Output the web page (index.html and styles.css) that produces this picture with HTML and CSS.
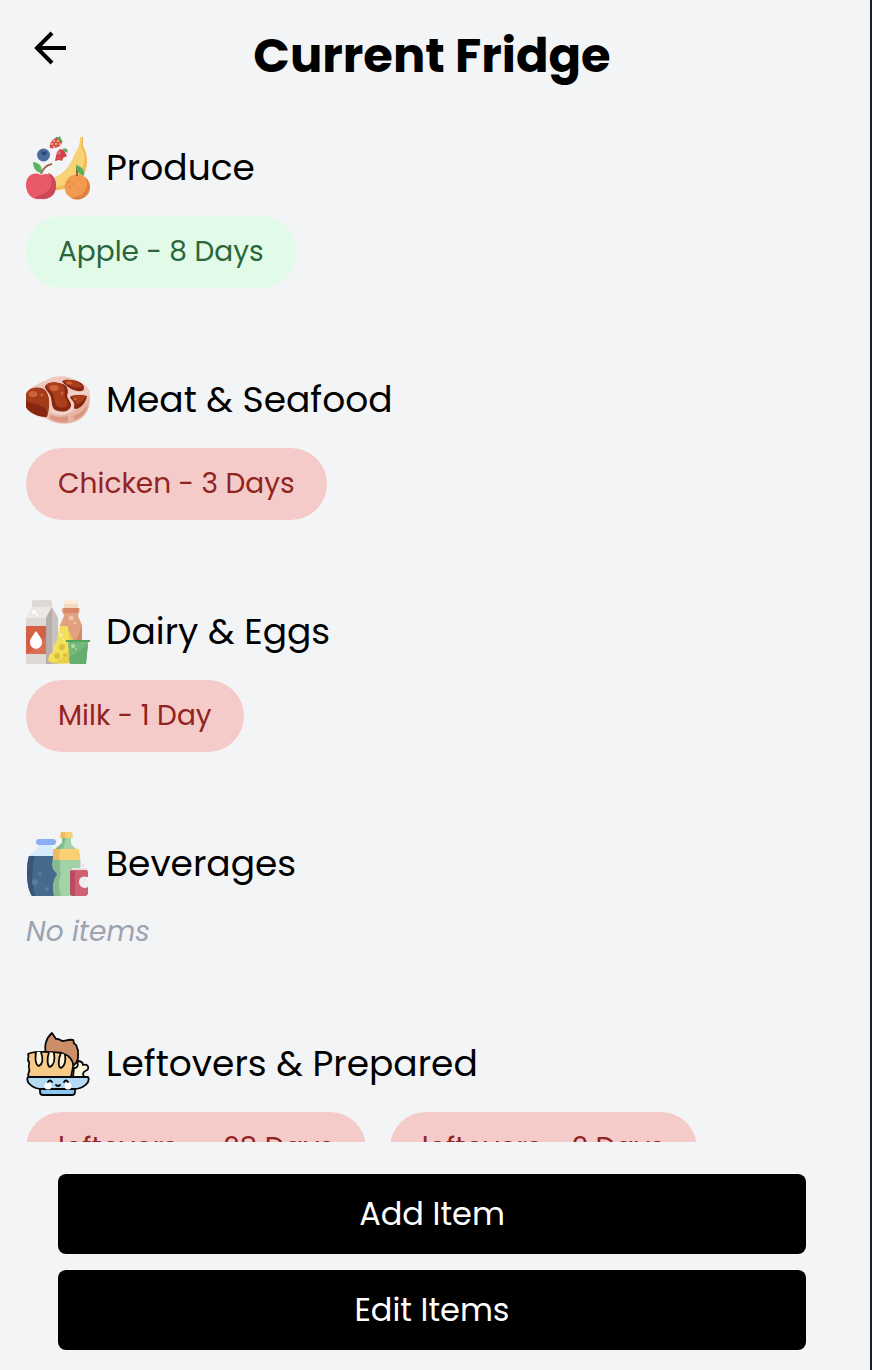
FILE: index.html
```
<!DOCTYPE html>
<html lang="en">
<head>
<meta charset="utf-8">
<meta name="viewport" content="width=device-width, initial-scale=1">
<title>Current Fridge</title>
<link rel="stylesheet" href="styles.css">
</head>
<body>
<div class="app">
  <header class="header">
    <button class="back" type="button" aria-label="Back">
      <svg viewBox="0 0 48 48" fill="none" stroke="currentColor" stroke-width="4"><path d="M40 24H12M26 9L11 24l15 15"/></svg>
    </button>
    <h1 class="title">Current Fridge</h1>
  </header>

  <main class="list">
    <section class="category">
      <h2 class="category-title">
        <svg class="icon" viewBox="0 0 64 64" aria-hidden="true">
          <path d="M54 1h3v9c6 11 5 22-1 31-6 8-16 13-27 13v-13c9-4 15-10 20-24 4-6 5-9 5-16z" fill="#f8d375"/>
          <path d="M56 1h1v9c6 11 5 22-1 31-6 8-16 13-27 13v-3c12-1 20-6 25-14 6-10 6-18 1-26z" fill="#f2b957"/>
          <path d="M36 6c0-3-3-4-6-4-4 1-7 6-6 10 4 1 12-1 12-6z" fill="#d84b58"/>
          <g fill="#f6cf69"><circle cx="28" cy="5" r="1"/><circle cx="32" cy="5" r="1"/><circle cx="26" cy="8" r="1"/><circle cx="30" cy="8" r="1"/><circle cx="34" cy="8" r="1"/><circle cx="28" cy="11" r="1"/></g>
          <path d="M29 1l4 0 1-1 1 3 2 3-3-1z" fill="#56a956"/>
          <circle cx="17.500" cy="19" r="6.500" fill="#4b6e9f"/><path d="M15 15l3 1 3-1-1 4h-4z" fill="#294873"/>
          <path d="M38 14l-4-1-3 3-1 4-1 5 4-1 3 1 1-3 4-2z" fill="#d6404e"/><circle cx="33" cy="17" r="2" fill="#ed6670"/><circle cx="33" cy="22" r="1" fill="#ed6670"/><path d="M37 12l1 3 4 2-1-4z" fill="#55aa57"/>
          <path d="M15 39c-8-4-15 1-15 10 0 10 7 15 14 14 9 1 16-4 16-13 0-10-7-14-15-11z" fill="#ea596a"/>
          <path d="M22 37c8 9 3 21-14 24 12 5 22 0 22-11 0-7-3-12-8-13z" fill="#cb475c"/>
          <path d="M15 38c2-6 5-9 11-10" fill="none" stroke="#a26749" stroke-width="2"/>
          <path d="M7 26c7 1 10 5 8 11-5-1-8-5-8-11z" fill="#5bb45f"/>
          <circle cx="51" cy="51" r="12.500" fill="#f29b50"/><path d="M59 41c5 9 1 19-14 21 9 4 19-1 19-11 0-4-2-8-5-10z" fill="#df803e"/>
          <path d="M51 40v-10" stroke="#8e6846" stroke-width="2"/><path d="M50 29c6 2 9 5 8 11-5-2-8-5-8-11z" fill="#55b05c"/>
          <g fill="#df803e"><circle cx="43" cy="46" r="1"/><circle cx="47" cy="48" r="1"/><circle cx="44" cy="51" r="1"/></g>
        </svg>
        Produce
      </h2>
      <ul class="pills"><li class="pill pill-fresh">Apple - 8 Days</li></ul>
    </section>

    <section class="category">
      <h2 class="category-title">
        <svg class="icon" viewBox="0 0 64 64" aria-hidden="true">
          <path d="M0 25C3 19 16 14 27 9c7-1 13-1 18 1 9 3 16 7 18 12 3 10-1 23-9 29-10 6-22 6-33 0-8-2-17-5-21-11z" fill="#efc9bd"/>
          <path d="M23 44c9 7 26 4 40-16 2 11-2 18-9 23-10 6-22 6-32 0z" fill="#e7b3a3"/>
          <path d="M25 47c6 3 11 2 17 1v6c-7 1-13 0-18-4zM47 48c7-2 11-6 14-11 1 6-6 13-12 15z" fill="#dc957f"/>
          <path d="M0 26c3-8 16-8 21-3 3 6 3 17 0 26-8 0-18-4-21-10z" fill="#a43b19"/>
          <path d="M0 32c5 5 9 2 14 6 5 1 8 3 7 11-8 0-18-4-21-10z" fill="#872711"/>
          <ellipse cx="7" cy="26" rx="4.500" ry="3" fill="#d2623b"/><circle cx="16" cy="27" r="1.500" fill="#d2623b"/>
          <path d="M19 18c3-5 15-4 20-1 4 4 3 8 2 11 1 4 5 6 4 10-2 6-8 6-13 5-8-2-5-9-8-16-2-4-5-5-5-9z" fill="#872711"/>
          <path d="M21 16c5-3 14-2 17 3 2 5 0 8 1 11 2 4 4 6 2 8-3 2-7 2-10 0-4-4-1-9-6-15-3-2-5-5-4-7z" fill="#a93f1c"/>
          <ellipse cx="28" cy="20" rx="4.500" ry="3" fill="#d2623b"/><circle cx="36" cy="25" r="1.500" fill="#d2623b"/>
          <path d="M36 13c7-3 22 0 22 7 0 7-16 2-22-7z" fill="#872711"/><path d="M38 12c8-1 17 3 18 7-6 2-15-1-18-7z" fill="#a93f1c"/><ellipse cx="43" cy="15" rx="3" ry="1.500" fill="#d2623b"/>
          <path d="M44 29c4-3 13-2 17-1-1 6-6 13-12 13-2-1 0-4-1-6-1-3-3-3-4-6z" fill="#872711"/><path d="M46 29c3-2 9-2 13-1-1 4-5 8-9 8 0-4-3-5-4-7z" fill="#a93f1c"/><circle cx="49" cy="31" r="1.500" fill="#d2623b"/>
          <path d="M18 20c9 9 4 18 9 23 6 4 17 3 19-2 2-5-4-8-3-14 3-4 12 0 19-4" fill="none" stroke="#f5ded6" stroke-width="1"/>
        </svg>
        Meat &amp; Seafood
      </h2>
      <ul class="pills"><li class="pill pill-soon">Chicken - 3 Days</li></ul>
    </section>

    <section class="category">
      <h2 class="category-title">
        <svg class="icon" viewBox="0 0 64 64" aria-hidden="true">
          <rect x="6" width="20" height="10" rx="2" fill="#ded9d5"/><path d="M6 7h20L20 24v40H0V18z" fill="#ece9e5"/>
          <path d="M0 18h20v46H0z" fill="#ddd9d4"/><path d="M26 7l6 11v46H20V18z" fill="#c9c1bd"/><path d="M26 7l-6 11v46h6z" fill="#b7aeab"/>
          <path d="M0 26h20v28H0z" fill="#d66045"/><path d="M0 54c8-3 15-11 20-18v18z" fill="#dc7055"/><path d="M10 31c-4 6-6 8-6 11 0 9 12 9 12 0 0-3-2-5-6-11z" fill="#fff"/>
          <circle cx="8" cy="12" r="2" fill="#fff"/><circle cx="11" cy="15" r="1" fill="#fff"/>
          <rect x="38" width="14" height="9" rx="2" fill="#fbebd7"/><path d="M38 4h14v4H38z" fill="#f3d8bd"/>
          <path d="M37 8h16c2 3-1 5-1 8l4 9v22H34V25l4-9c0-3-4-5-1-8z" fill="#e2a17d"/><path d="M37 8h16l-1 5H38zM56 24v23H41c8-4 13-12 15-23z" fill="#d98867"/>
          <circle cx="45" cy="18" r="2.500" fill="#edc3ab"/><circle cx="49" cy="23" r="1.500" fill="#edc3ab"/>
          <path d="M34 26h8v4l3 6 3 6v21c-10 1-21 1-26-2l1-6 4-3v-7l3-2z" fill="#f3df5c"/><path d="M43 32l4 10v20c-8 2-17 2-22 0 9 0 16-7 18-13z" fill="#e8d04f"/>
          <circle cx="36" cy="47" r="3" fill="#d7c13e"/><circle cx="31" cy="56" r="3" fill="#d7c13e"/><circle cx="39" cy="55" r="2" fill="#d7c13e"/><circle cx="35" cy="35" r="2" fill="#f8eea5"/><circle cx="37" cy="39" r="1" fill="#f8eea5"/>
          <path d="M40 40h24v2h-2l-2 22H44l-2-22h-2z" fill="#75b97a"/><path d="M40 40h24v2H40z" fill="#52a45c"/><path d="M43 57c7-3 14-8 18-13h1l-2 20H44z" fill="#67ad6d"/><circle cx="47" cy="46" r="2" fill="#b5d9b2"/><circle cx="50" cy="49" r="1" fill="#b5d9b2"/>
        </svg>
        Dairy &amp; Eggs
      </h2>
      <ul class="pills"><li class="pill pill-soon">Milk - 1 Day</li></ul>
    </section>

    <section class="category">
      <h2 class="category-title">
        <svg class="icon" viewBox="0 0 64 64" aria-hidden="true">
          <path d="M13 11h13v6l4 7H3l9-8z" fill="#d5eafa"/><rect x="10" y="7" width="20" height="6" rx="3" fill="#8badf5"/>
          <path d="M3 24h28v40H6c-6-8-6-31-3-40z" fill="#456a8e"/><path d="M3 24h6c-3 12-4 32 1 40H6c-6-8-6-31-3-40z" fill="#395775"/>
          <circle cx="9" cy="50" r="3" fill="#597da1"/><circle cx="14" cy="42" r="2" fill="#597da1"/><circle cx="21" cy="57" r="2" fill="#597da1"/>
          <path d="M36 5h9v6c0 4 9 5 9 14 1 8 1 11-2 15 4 6 2 15 2 24H28c-1-8-2-16 4-22-8-5-5-11-5-17 0-9 6-11 9-14z" fill="#a2d3a8"/>
          <path d="M36 5h4c-2 13-9 22-5 37-3 8-2 16 0 22h-7c-1-8-2-16 4-22-8-5-5-11-5-17 0-9 6-11 9-14z" fill="#84bc90"/>
          <path d="M27 17h26l1 11H27z" fill="#fad072"/><path d="M27 17h7l-1 11h-6z" fill="#eeb965"/><path d="M35 0h11l1 6H34z" fill="#fad072"/><path d="M35 0h4v6h-5z" fill="#eeb965"/>
          <path d="M44 39l2-3h14l2 4v22l-2 2H46l-2-2z" fill="#cf6170"/><path d="M44 39h5v25h-3l-2-2z" fill="#b84c60"/><path d="M46 36h14l1 2H45z" fill="#e6e3e8"/><path d="M56 35l2-3" stroke="#ccd" stroke-width="1"/><path d="M62 45c-7-2-9 2-9 5s3 8 9 5z" fill="#eee"/>
        </svg>
        Beverages
      </h2>
      <p class="empty">No items</p>
    </section>

    <section class="category">
      <h2 class="category-title">
        <svg class="icon" viewBox="0 0 64 64" aria-hidden="true" stroke="#080808" stroke-width="1.800" stroke-linejoin="round" stroke-linecap="round">
          <path d="M20 21c-2-7 0-15 6-20l4 6c3-1 4 2 7 2s5-2 10-1c2 2-1 3 2 4 3 2 1 4 3 6 0 7 1 11-4 15z" fill="#cc8d69"/>
          <path d="M48 36c5 0 4-4 3-7 4 0 6 1 6 4 4-1 6 1 5 4-1 2-5 2-5 5l1 3H47z" fill="#fff6dc"/>
          <path d="M2 22c6-3 23-2 34-1 7 2 12 8 11 14l-2 10H3c-3-4 2-4 0-9-1-3 1-4 0-6-3-3 1-4-1-8z" fill="#f8ca87"/>
          <g fill="#fff3da"><path d="M10 20c-1 7-1 13 3 14 4-2 4-8 2-14"/><path d="M23 20c-2 6-2 14 1 15 4-2 5-8 4-14"/><path d="M35 21c-3 6-3 14 0 15 4-2 5-8 4-13"/></g>
          <path d="M14 57h35v3q0 3-3 3H17q-3 0-3-3z" fill="#8dc7ef"/><path d="M2 45h60c3 5-5 12-14 12H16C7 57-1 50 2 45z" fill="#b4d9f2"/>
          <g fill="#fff" stroke="none"><circle cx="22" cy="54" r="3.500"/><circle cx="42" cy="54" r="3.500"/></g>
          <path d="M22 50q2-3 4 0M38 50q2-3 4 0M30 53q2 2 4 0" fill="none"/>
        </svg>
        Leftovers &amp; Prepared
      </h2>
      <ul class="pills"><li class="pill pill-soon">leftovers - -28 Days</li><li class="pill pill-soon">leftovers - 2 Days</li></ul>
    </section>
  </main>

  <footer class="actions">
    <button class="action" type="button">Add Item</button>
    <button class="action" type="button">Edit Items</button>
  </footer>
</div>
</body>
</html>
```
FILE: styles.css
```
* { box-sizing: border-box; }
body {
  margin: 0;
  background: #f3f4f6;
  color: #000;
  font-family: Poppins, Inter, "Open Sans", sans-serif;
}
.app {
  display: flex;
  flex-direction: column;
  height: 100vh;
  padding: 0 32px 20px 26px;
  border-right: 2px solid #1c1f2b;
}
.header {
  display: grid;
  grid-template-columns: 48px 1fr 48px;
  padding: 24px 0 40px;
}
.back {
  width: 48px;
  height: 48px;
  padding: 0;
  border: 0;
  background: none;
  color: inherit;
}
.back svg { display: block; }
.title {
  margin: 0;
  font-size: 48px;
  line-height: 64px;
  font-weight: 700;
  text-align: center;
}
.list {
  display: flex;
  flex: 1;
  flex-direction: column;
  gap: 80px;
  min-height: 0;
  padding-top: 8px;
  overflow: hidden;
}
.category {
  display: flex;
  flex: none;
  flex-direction: column;
  gap: 16px;
}
.category-title {
  display: flex;
  align-items: center;
  gap: 16px;
  margin: 0;
  font-size: 36px;
  line-height: 64px;
  font-weight: 400;
}
.icon {
  flex: none;
  width: 64px;
  height: 64px;
}
.pills {
  display: flex;
  flex-wrap: wrap;
  gap: 24px;
  margin: 0;
  padding: 0;
  list-style: none;
}
.pill {
  padding: 16px 32px;
  border-radius: 36px;
  font-size: 28px;
  line-height: 40px;
}
.pill-fresh {
  background: #e1fbe8;
  color: #2c653b;
}
.pill-soon {
  background: #f5cbca;
  color: #912321;
}
.empty {
  margin: 0;
  color: #9ca3af;
  font-size: 28px;
  line-height: 40px;
  font-style: italic;
}
.actions {
  display: flex;
  flex-direction: column;
  gap: 16px;
  padding: 32px 32px 0;
}
.action {
  height: 80px;
  border: 0;
  border-radius: 8px;
  background: #000;
  color: #fff;
  font: inherit;
  font-size: 32px;
}
```
